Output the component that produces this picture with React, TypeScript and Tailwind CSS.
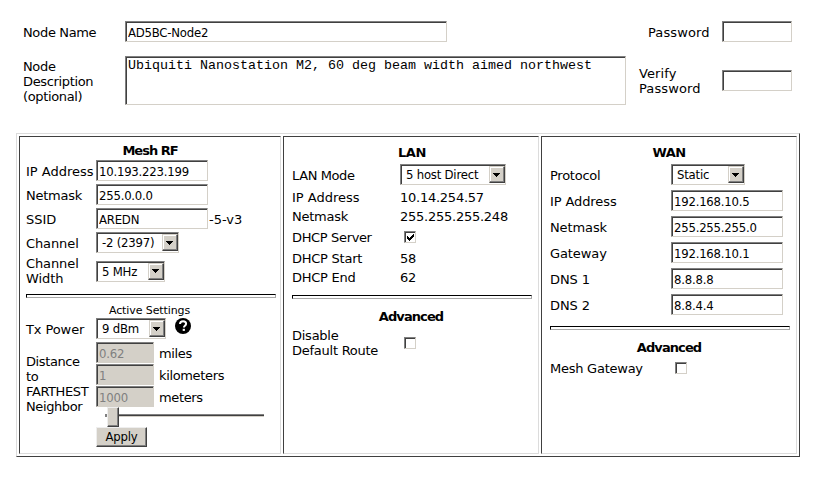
import type { ReactNode } from 'react';

const sans = "font-['DejaVu_Sans','Liberation_Sans',sans-serif]";
const cond = "font-['DejaVu_Sans_Condensed','DejaVu_Sans',sans-serif] [font-stretch:condensed] tracking-[-0.22px]";

function Field({ value, className, disabled }: { value: string; className: string; disabled?: boolean }) {
  return (
    <div className={`h-[21px] shrink-0 border-t border-l border-t-[#808080] border-l-[#808080] border-r border-b border-r-[#d4d0c8] border-b-[#d4d0c8] ${className}`}>
      <input
        readOnly
        disabled={disabled}
        value={value}
        className={`block h-[19px] w-full rounded-none border-t border-l border-[#404040] pl-px text-[13px] leading-4 outline-none ${cond} ${disabled ? 'bg-[#d4d0c8] text-[#808080]' : 'bg-white text-black'}`}
      />
    </div>
  );
}

function Select({ value, className }: { value: string; className: string }) {
  return (
    <div className={`h-[21px] shrink-0 border-t border-l border-t-[#808080] border-l-[#808080] border-r border-b border-r-[#d4d0c8] border-b-[#d4d0c8] ${className}`}>
      <div className={`flex h-[19px] items-start border-t border-l border-[#404040] pl-1 text-[13px] ${cond}`}>
        <span className="mt-px flex-1 whitespace-nowrap leading-4">{value}</span>
        <span className="flex h-[17px] w-4 shrink-0 items-center justify-center border border-t-[#d4d0c8] border-l-[#d4d0c8] border-r-[#404040] border-b-[#404040] bg-[#d4d0c8] pr-px shadow-[inset_-1px_-1px_0_#808080,inset_1px_1px_0_#ffffff]">
          <svg width="7" height="4" shapeRendering="crispEdges"><path d="M0 0h7v1H6v1H5v1H4v1H3V3H2V2H1V1H0z" /></svg>
        </span>
      </div>
    </div>
  );
}

function Check({ checked, className = '' }: { checked?: boolean; className?: string }) {
  return (
    <span className={`block size-3 shrink-0 border border-t-[#808080] border-l-[#808080] border-r-[#d4d0c8] border-b-[#d4d0c8] ${className}`}>
      <span className="block size-[10px] border-t border-l border-[#404040]">
        {checked && (
          <svg width="9" height="9" shapeRendering="crispEdges"><path d="M1 3h1v1h1v1h1V4h1V3h1V2h1V1h1v3H7v1H6v1H5v1H4v1H3V7H2V6H1z" /></svg>
        )}
      </span>
    </span>
  );
}

function Rule({ className }: { className: string }) {
  return <div className={`h-1 shrink-0 border border-t-black border-l-black border-r-[#a8a8a8] border-b-[#a8a8a8] ${className}`} />;
}

function Row({ label, className, labelClass, children }: { label: ReactNode; className: string; labelClass: string; children?: ReactNode }) {
  return (
    <div className={`flex shrink-0 items-center whitespace-nowrap ${className}`}>
      <div className={`shrink-0 ${labelClass}`}>{label}</div>
      {children}
    </div>
  );
}

function Title({ children, className }: { children: ReactNode; className: string }) {
  return <div className={`shrink-0 text-center font-bold ${className}`}>{children}</div>;
}

const cell = 'flex flex-col border border-t-[#404040] border-l-[#404040] border-r-[#dcdcdc] border-b-[#dcdcdc]';

export default function App() {
  return (
    <div className={`h-[479px] w-[831px] overflow-hidden bg-white text-[13px] leading-[15px] tracking-[-0.25px] text-black ${sans}`}>
      <div className="flex h-[133px] items-start whitespace-nowrap pt-[21px] pl-[23px]">
        <div className="w-[102px] tracking-[-0.35px]">
          <div className="pt-1">Node Name</div>
          <div className="pt-[19px]">Node<br />Description<br />(optional)</div>
        </div>
        <div className="w-[501px]">
          <Field value="AD5BC-Node2" className="w-[322px]" />
          <div className="mt-[14px] h-[49px] border border-t-[#808080] border-l-[#808080] border-r-[#d4d0c8] border-b-[#d4d0c8]">
            <div className="h-[47px] border-t border-l border-[#404040] pl-px font-['Liberation_Mono',monospace] text-[13.33px] leading-[15px] tracking-normal">
              Ubiquiti Nanostation M2, 60 deg beam width aimed northwest
            </div>
          </div>
        </div>
        <div className="ml-[13px] w-[83px] tracking-[0.1px]">
          <div className="pt-1 pl-[9px]">Password</div>
          <div className="pt-[26px]">Verify<br />Password</div>
        </div>
        <div>
          <Field value="" className="w-[70px]" />
          <Field value="" className="mt-7 w-[70px]" />
        </div>
      </div>

      <div className="ml-4 flex h-[324px] w-[784px] gap-[2px] border border-t-[#dcdcdc] border-l-[#dcdcdc] border-r-[#404040] border-b-[#404040] p-[2px]">
        <div className={`${cell} w-[262px] pl-[6px]`}>
          <Title className="h-[23px] w-[248px] pt-[6px] tracking-[-1px]">Mesh RF</Title>
          <Row label="IP Address" className="h-6 pb-[3px]" labelClass="w-[70px] pt-px tracking-normal"><Field value="10.193.223.199" className="w-28" /></Row>
          <Row label="Netmask" className="h-6 pb-[3px]" labelClass="w-[70px] pt-px"><Field value="255.0.0.0" className="w-28" /></Row>
          <Row label="SSID" className="h-6 pb-[3px]" labelClass="w-[70px] pt-px tracking-normal"><Field value="AREDN" className="w-28" /><span className="pt-px pl-px tracking-normal">-5-v3</span></Row>
          <Row label="Channel" className="h-6 pb-[3px]" labelClass="w-[70px] pt-px tracking-[-0.1px]"><Select value="-2 (2397)" className="w-[83px]" /></Row>
          <Row label={<>Channel<br />Width</>} className="h-[30px]" labelClass="w-[70px] tracking-[-0.1px]"><Select value="5 MHz" className="w-[69px]" /></Row>
          <Rule className="mt-2 w-[250px]" />
          <div className="h-5 w-[247px] pt-[6px] text-center text-[11px] leading-[13px] tracking-[-0.1px]">Active Settings</div>
          <Row label="Tx Power" className="h-[21px]" labelClass="w-[70px] pt-[2px] tracking-[-0.1px]">
            <Select value="9 dBm" className="w-[70px]" />
            <svg className="mb-[5px] ml-[9px]" width="16" height="16" viewBox="0 0 16 16">
              <circle cx="8" cy="8" r="8" />
              <path d="M5 6.1C5 4.2 6.3 3.2 8.1 3.2s3 1 3 2.6c0 2-2.2 2-2.2 3.7" fill="none" stroke="white" strokeWidth="2" />
              <path d="M7.7 10.8h2.2v2.1H7.7z" fill="white" />
            </svg>
          </Row>
          <div className="flex pt-[3px]">
            <div className="w-[70px] pt-3 tracking-[-0.4px]">Distance<br />to<br />FARTHEST<br />Neighbor</div>
            <div>
              <Row label={<Field value="0.62" disabled className="w-[58px]" />} className="h-[22px] items-start" labelClass="w-[63px]"><span className="pt-1 tracking-[-0.35px]">miles</span></Row>
              <Row label={<Field value="1" disabled className="w-[58px]" />} className="h-[22px] items-start" labelClass="w-[63px]"><span className="pt-1 tracking-[-0.35px]">kilometers</span></Row>
              <Row label={<Field value="1000" disabled className="w-[58px]" />} className="h-[21px] items-start" labelClass="w-[63px]"><span className="pt-1 tracking-[-0.35px]">meters</span></Row>
              <div className="flex h-5 items-start pl-[9px]">
                <span className="mt-[7px] h-[3px] w-[2px] bg-[#808080]" />
                <span className="h-5 w-3 border border-t-[#eeeeee] border-l-[#eeeeee] border-r-[#404040] border-b-[#404040] bg-[#d4d0c8] shadow-[inset_-1px_-1px_0_#808080]" />
                <span className="mt-[7px] h-[3px] w-[145px] border-t border-b border-t-[#808080] border-b-[#d4d0c8] bg-[#404040]" />
              </div>
              <button className={`block h-5 w-[51px] border border-t-[#eeeeee] border-l-[#eeeeee] border-r-[#404040] border-b-[#404040] bg-[#d4d0c8] text-[13px] leading-[18px] shadow-[inset_-1px_-1px_0_#808080] ${cond}`}>Apply</button>
            </div>
          </div>
        </div>

        <div className={`${cell} w-64 pl-2`}>
          <Title className="h-[27px] w-[240px] pt-2 tracking-[-0.4px]">LAN</Title>
          <Row label="LAN Mode" className="h-[21px]" labelClass="w-[108px] pt-[2px] tracking-[-0.4px]"><Select value="5 host Direct" className="w-[106px]" /></Row>
          <Row label="IP Address" className="mt-[5px] h-[19px] items-start" labelClass="w-[108px] tracking-normal">10.14.254.57</Row>
          <Row label="Netmask" className="h-[21px] items-start" labelClass="w-[108px]">255.255.255.248</Row>
          <Row label="DHCP Server" className="h-[21px] items-start" labelClass="w-[112px] tracking-[-0.35px]"><Check checked className="mt-px" /></Row>
          <Row label="DHCP Start" className="h-[19px] items-start" labelClass="w-[108px]">58</Row>
          <Row label="DHCP End" className="h-[19px] items-start" labelClass="w-[108px]">62</Row>
          <Rule className="mt-[6px] w-[240px]" />
          <Title className="h-[29px] w-[238px] pt-[10px] tracking-[-0.9px]">Advanced</Title>
          <Row label={<>Disable<br />Default Route</>} className="h-[30px]" labelClass="w-[112px]"><Check /></Row>
        </div>

        <div className={`${cell} w-64 pl-2`}>
          <Title className="h-[27px] w-[238px] pt-2 tracking-[-0.5px]">WAN</Title>
          <Row label="Protocol" className="h-[21px]" labelClass="w-[121px] pt-[2px]"><Select value="Static" className="w-[74px]" /></Row>
          {[
            ['IP Address', '192.168.10.5'],
            ['Netmask', '255.255.255.0'],
            ['Gateway', '192.168.10.1'],
            ['DNS 1', '8.8.8.8'],
            ['DNS 2', '8.8.4.4'],
          ].map(([label, value]) => (
            <Row key={label} label={label} className="mt-[5px] h-[21px]" labelClass="w-[121px] pt-[2px] tracking-[-0.1px]"><Field value={value} className="w-28" /></Row>
          ))}
          <Rule className="mt-[11px] w-[240px]" />
          <Title className="h-[30px] w-[238px] pt-[10px] tracking-[-0.9px]">Advanced</Title>
          <Row label="Mesh Gateway" className="h-4" labelClass="w-[125px]"><Check /></Row>
        </div>
      </div>
    </div>
  );
}
